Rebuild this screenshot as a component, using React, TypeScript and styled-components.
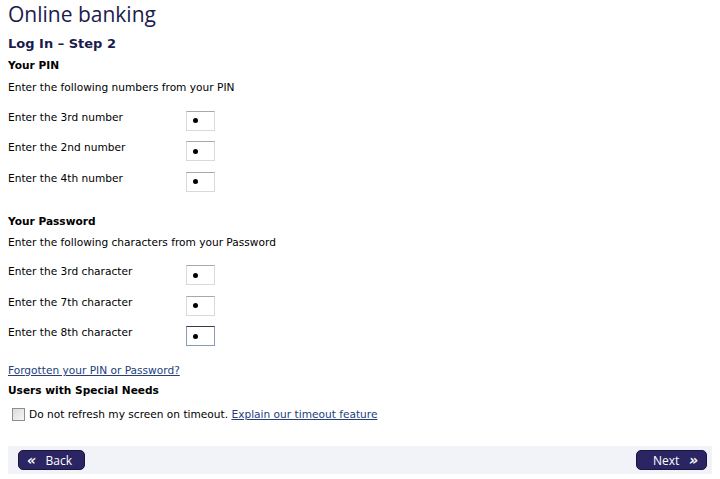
import React from 'react';
import styled, { createGlobalStyle } from 'styled-components';

const GlobalStyle = createGlobalStyle`
  body {
    margin: 0;
    background: #ffffff;
    font-family: "DejaVu Sans", Verdana, sans-serif;
    font-size: 10.6px;
    color: #000;
  }
`;

const Page = styled.div`
  width: 720px;
  height: 479px;
  padding: 0 8px;
  box-sizing: border-box;
  display: flex;
  flex-direction: column;
`;

const Title = styled.h1`
  margin: 0;
  font-family: "Open Sans", sans-serif;
  font-weight: 400;
  font-size: 21px;
  line-height: 28px;
  color: #1b1b4d;
`;

const StepTitle = styled.h2`
  margin: 6px 0 0;
  font-size: 13px;
  font-weight: bold;
  line-height: 20px;
  color: #1b1b4d;
`;

const SectionTitle = styled.h3<{ top?: number }>`
  margin: ${({ top }) => top ?? 0}px 0 0;
  font-size: 10.6px;
  font-weight: bold;
  line-height: 20px;
`;

const Intro = styled.p<{ top: number }>`
  margin: ${({ top }) => top}px 0 13.5px;
  line-height: 20px;
`;

const Row = styled.div`
  display: flex;
  align-items: flex-start;
  height: 30.5px;
`;

const Label = styled.span`
  width: 178px;
  line-height: 12px;
`;

const Box = styled.div<{ focused?: boolean }>`
  width: 29px;
  height: 20px;
  box-sizing: border-box;
  border: 1px solid ${({ focused }) => (focused ? '#8a9ab6' : '#d9d9d9')};
  border-top-color: ${({ focused }) => (focused ? '#3a3a4a' : '#a8a8a8')};
  display: flex;
  align-items: center;
  padding-left: 6px;
  &::before {
    content: '';
    width: 5px;
    height: 5px;
    border-radius: 50%;
    background: #000;
  }
`;

const Link = styled.a`
  color: #23407c;
  text-decoration: underline;
  cursor: pointer;
`;

const ForgotLine = styled.div`
  margin-top: 3.5px;
  line-height: 20px;
`;

const CheckRow = styled.label`
  display: flex;
  align-items: center;
  gap: 4px;
  margin-top: 4px;
  padding-left: 4px;
  line-height: 20px;
`;

const Check = styled.span`
  width: 11px;
  height: 11px;
  border: 1px solid #8e8e8e;
  background: linear-gradient(135deg, #dcdcdc, #f6f6f6);
`;

const Footer = styled.div`
  margin-top: 22px;
  height: 28px;
  background: #f2f2f9;
  display: flex;
  align-items: center;
  justify-content: space-between;
  padding: 0 5px 0 10px;
`;

const NavButton = styled.button<{ w: number }>`
  width: ${({ w }) => w}px;
  height: 20px;
  border: 1px solid #1a1640;
  border-radius: 5px;
  background: #2b2663;
  color: #fff;
  font-family: "Open Sans", sans-serif;
  font-size: 12px;
  display: flex;
  align-items: center;
  justify-content: space-between;
  padding: 0 8px;
  cursor: pointer;
`;

const Chevrons = styled.span`
  font-weight: bold;
  font-style: italic;
  font-size: 14px;
  line-height: 1;
  font-family: "DejaVu Sans", sans-serif;
`;

const pinRows = ['3rd number', '2nd number', '4th number'];
const pwRows = ['3rd character', '7th character', '8th character'];

export default function App() {
  return (
    <>
      <GlobalStyle />
      <Page>
        <Title>Online banking</Title>
        <StepTitle>Log In – Step 2</StepTitle>
        <SectionTitle top={1}>Your PIN</SectionTitle>
        <Intro top={2}>Enter the following numbers from your PIN</Intro>
        {pinRows.map((r) => (
          <Row key={r}>
            <Label>Enter the {r}</Label>
            <Box />
          </Row>
        ))}
        <SectionTitle top={8.5}>Your Password</SectionTitle>
        <Intro top={1}>Enter the following characters from your Password</Intro>
        {pwRows.map((r, i) => (
          <Row key={r}>
            <Label>Enter the {r}</Label>
            <Box focused={i === 2} />
          </Row>
        ))}
        <ForgotLine>
          <Link>Forgotten your PIN or Password?</Link>
        </ForgotLine>
        <SectionTitle>Users with Special Needs</SectionTitle>
        <CheckRow>
          <Check />
          <span>
            Do not refresh my screen on timeout. <Link>Explain our timeout feature</Link>
          </span>
        </CheckRow>
        <Footer>
          <NavButton w={67}>
            <Chevrons>«</Chevrons>
            <span style={{ marginRight: 4 }}>Back</span>
          </NavButton>
          <NavButton w={71}>
            <span style={{ marginLeft: 8 }}>Next</span>
            <Chevrons>»</Chevrons>
          </NavButton>
        </Footer>
      </Page>
    </>
  );
}
